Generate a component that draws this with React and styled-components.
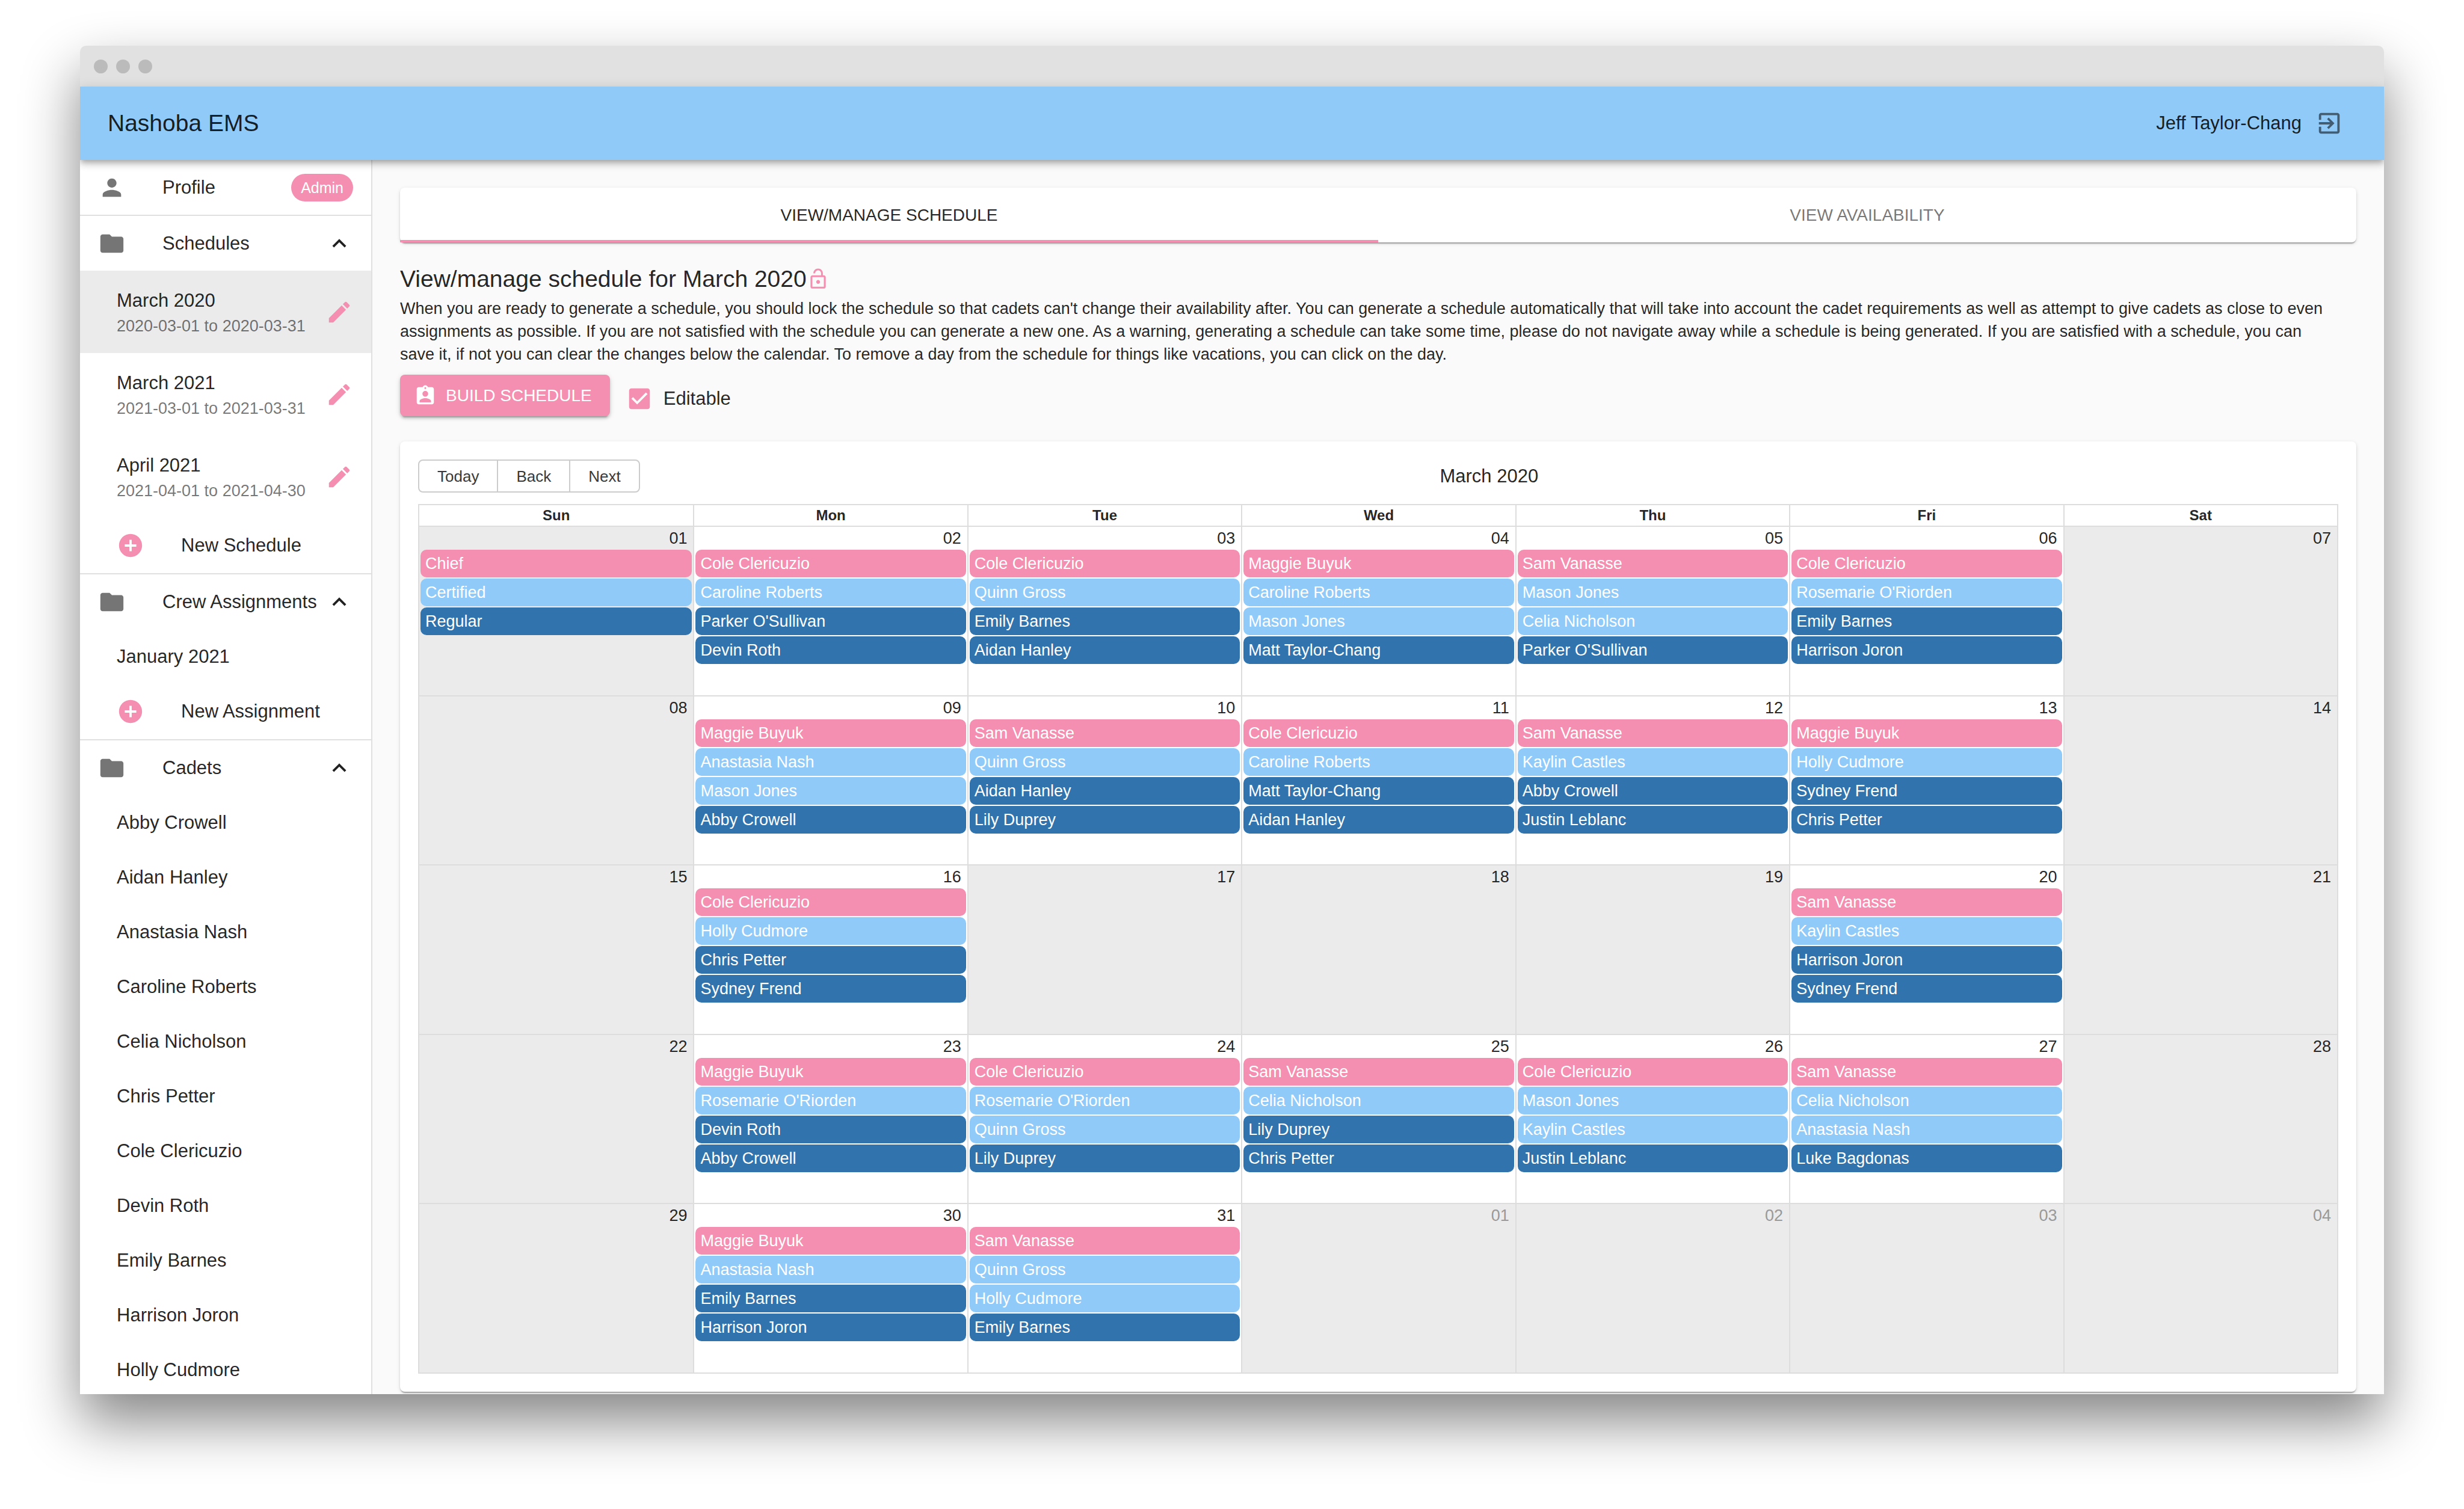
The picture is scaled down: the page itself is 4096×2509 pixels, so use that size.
import React, { useState } from 'react';
import styled, { createGlobalStyle } from 'styled-components';

const INK = 'rgba(0, 0, 0, 0.87)';
const MUTED = 'rgba(0, 0, 0, 0.54)';
const PINK = '#f48fb1';
const SKY = '#90caf9';
const NAVY = '#3174ad';
const LINE = '#ddd';
const RAISED =
  '0 4px 2px -2px rgba(0,0,0,.2), 0 2px 2px 0 rgba(0,0,0,.14), 0 2px 6px 0 rgba(0,0,0,.12)';

const GlobalStyle = createGlobalStyle`
  *, *::before, *::after { box-sizing: border-box; }
  body {
    margin: 0;
    background: #fff;
    color: ${INK};
    font-family: "Liberation Sans", Helvetica, Arial, sans-serif;
    font-size: 31px;
    line-height: 46px;
  }
  button { font: inherit; color: inherit; border: 0; background: none; padding: 0; margin: 0; cursor: pointer; }
  a { color: inherit; text-decoration: none; }
  ul { list-style: none; margin: 0; padding: 0; }
`;

/* ---------- icons ---------- */

const Svg = styled.svg`
  display: block;
  flex: none;
  width: ${(p) => p.$size || 46}px;
  height: ${(p) => p.$size || 46}px;
  fill: ${(p) => p.$color || 'currentColor'};
`;

const PATHS = {
  person:
    'M12 12c2.21 0 4-1.79 4-4s-1.79-4-4-4-4 1.79-4 4 1.79 4 4 4zm0 2c-2.67 0-8 1.34-8 4v2h16v-2c0-2.66-5.33-4-8-4z',
  folder:
    'M10 4H4c-1.1 0-1.99.9-1.99 2L2 18c0 1.1.9 2 2 2h16c1.1 0 2-.9 2-2V8c0-1.1-.9-2-2-2h-8l-2-2z',
  edit:
    'M3 17.25V21h3.75L17.81 9.94l-3.75-3.75L3 17.25zM20.71 7.04c.39-.39.39-1.02 0-1.41l-2.34-2.34c-.39-.39-1.02-.39-1.41 0l-1.83 1.83 3.75 3.75 1.83-1.83z',
  add:
    'M12 2C6.48 2 2 6.48 2 12s4.48 10 10 10 10-4.48 10-10S17.52 2 12 2zm5 11h-4v4h-2v-4H7v-2h4V7h2v4h4v2z',
  less: 'M12 8l-6 6 1.41 1.41L12 10.83l4.59 4.58L18 14z',
  exit:
    'M10.09 15.59L11.5 17l5-5-5-5-1.41 1.41L12.67 11H3v2h9.67l-2.58 2.59zM19 3H5c-1.11 0-2 .9-2 2v4h2V5h14v14H5v-4H3v4c0 1.1.89 2 2 2h14c1.1 0 2-.9 2-2V5c0-1.1-.9-2-2-2z',
  lockOpen:
    'M12 17c1.1 0 2-.9 2-2s-.9-2-2-2-2 .9-2 2 .9 2 2 2zm6-9h-1V6c0-2.76-2.24-5-5-5S7 3.24 7 6h1.9c0-1.71 1.39-3.1 3.1-3.1 1.71 0 3.1 1.39 3.1 3.1v2H6c-1.1 0-2 .9-2 2v10c0 1.1.9 2 2 2h12c1.1 0 2-.9 2-2V10c0-1.1-.9-2-2-2zm0 12H6V10h12v10z',
  badge:
    'M19 3h-4.18C14.4 1.84 13.3 1 12 1c-1.3 0-2.4.84-2.82 2H5c-1.1 0-2 .9-2 2v14c0 1.1.9 2 2 2h14c1.1 0 2-.9 2-2V5c0-1.1-.9-2-2-2zm-7 0c.55 0 1 .45 1 1s-.45 1-1 1-1-.45-1-1 .45-1 1-1zm0 4c1.66 0 3 1.34 3 3s-1.34 3-3 3-3-1.34-3-3 1.34-3 3-3zm6 12H6v-1.4c0-2 4-3.1 6-3.1s6 1.1 6 3.1V19z',
  checked:
    'M19 3H5c-1.11 0-2 .9-2 2v14c0 1.1.89 2 2 2h14c1.11 0 2-.9 2-2V5c0-1.1-.89-2-2-2zm-9 14l-5-5 1.41-1.41L10 14.17l7.59-7.59L19 8l-9 9z',
  unchecked:
    'M19 5v14H5V5h14m0-2H5c-1.1 0-2 .9-2 2v14c0 1.1.9 2 2 2h14c1.1 0 2-.9 2-2V5c0-1.1-.9-2-2-2z',
};

const Icon = ({ name, size, color }) => (
  <Svg viewBox="0 0 24 24" $size={size} $color={color} aria-hidden="true">
    <path d={PATHS[name]} />
  </Svg>
);

/* ---------- window frame ---------- */

const Page = styled.div`
  display: flex;
  height: 100vh;
  padding: 76px 133px 191px;
`;

const Window = styled.div`
  flex: 1;
  min-width: 0;
  display: flex;
  flex-direction: column;
  overflow: hidden;
  border-radius: 10px 10px 0 0;
  background: #fafafa;
  box-shadow: 0 46px 95px rgba(0, 0, 0, 0.48);
`;

const TitleBar = styled.div`
  display: flex;
  flex: none;
  align-items: center;
  gap: 14px;
  height: 68px;
  padding-left: 23px;
  background: #e1e1e1;
`;

const Dot = styled.span`
  width: 23px;
  height: 23px;
  border-radius: 50%;
  background: #bbb;
`;

const AppBar = styled.header`
  position: relative;
  z-index: 1;
  display: flex;
  flex: none;
  align-items: center;
  height: 122px;
  padding: 0 68px 0 46px;
  background: ${SKY};
  box-shadow: 0 4px 8px -2px rgba(0, 0, 0, 0.2), 0 8px 10px 0 rgba(0, 0, 0, 0.14),
    0 2px 19px 0 rgba(0, 0, 0, 0.12);
`;

const Brand = styled.h1`
  flex: 1;
  margin: 0;
  font-size: 39px;
  font-weight: 400;
`;

const IconButton = styled.button`
  display: flex;
  margin-left: ${(p) => p.$gap || 0}px;
`;

const Body = styled.div`
  flex: 1;
  min-height: 0;
  display: flex;
`;

/* ---------- sidebar ---------- */

const Sidebar = styled.nav`
  flex: none;
  width: 486px;
  overflow: hidden;
  border-right: 2px solid #e0e0e0;
  background: #fff;
`;

const Section = styled.section`
  & + & {
    border-top: 2px solid #e0e0e0;
  }
`;

const SectionRow = styled.button`
  display: flex;
  align-items: center;
  width: 100%;
  height: 91px;
  padding: 0 30px;
  text-align: left;
`;

const SectionList = styled.ul`
  && {
    padding-bottom: 1px;
  }
`;

const IconSlot = styled.span`
  flex: none;
  width: 107px;
`;

const Label = styled.span`
  flex: 1;
  white-space: nowrap;
`;

const Chip = styled.span`
  height: 46px;
  padding: 0 16px;
  border-radius: 23px;
  background: ${PINK};
  color: #fff;
  font-size: 25px;
`;

const ItemLink = styled.a`
  display: flex;
  align-items: center;
  height: 91px;
  padding: 0 30px 0 61px;
`;

const ScheduleItem = styled.li`
  display: flex;
  align-items: center;
  height: 137px;
  padding: 0 30px 0 61px;
  background: ${(p) => (p.$selected ? '#ebebeb' : 'transparent')};
`;

const ScheduleLink = styled.a`
  flex: 1;
  display: flex;
  flex-direction: column;
`;

const Range = styled.span`
  color: ${MUTED};
  font-size: 27px;
  line-height: 38px;
  white-space: nowrap;
`;

/* ---------- main ---------- */

const Main = styled.main`
  flex: 1;
  min-width: 0;
  display: flex;
  flex-direction: column;
  padding: 46px 46px 4px;
`;

const Tabs = styled.div`
  display: flex;
  flex: none;
  border-radius: 8px;
  background: #fff;
  box-shadow: ${RAISED};
`;

const Tab = styled.button`
  flex: 1;
  height: 91px;
  font-size: 28px;
  text-transform: uppercase;
  color: ${(p) => (p.$active ? INK : MUTED)};
  box-shadow: ${(p) => (p.$active ? `inset 0 -4px 0 ${PINK}` : 'none')};
`;

const Heading = styled.h2`
  display: flex;
  flex: none;
  align-items: center;
  margin: 30px 0 0;
  font-size: 39px;
  font-weight: 400;
  line-height: 61px;
`;

const Intro = styled.p`
  margin: 0;
  padding-right: 38px;
  font-size: 27px;
  line-height: 38px;
`;

const Actions = styled.div`
  display: flex;
  flex: none;
  align-items: flex-start;
  gap: 26px;
  margin: 15px 0 31px;
`;

const BuildButton = styled.button`
  display: flex;
  align-items: center;
  gap: 15px;
  height: 69px;
  padding: 0 30px 0 23px;
  border-radius: 8px;
  background: ${PINK};
  color: #fff;
  font-size: 28px;
  text-transform: uppercase;
  box-shadow: 0 6px 2px -4px rgba(0, 0, 0, 0.2), 0 4px 4px 0 rgba(0, 0, 0, 0.14),
    0 2px 10px 0 rgba(0, 0, 0, 0.12);
`;

const CheckLabel = styled.label`
  display: flex;
  align-items: center;
  gap: 17px;
  height: 80px;
  cursor: pointer;
`;

const CheckBox = styled.span`
  position: relative;
  display: block;
  color: ${PINK};
`;

const CheckInput = styled.input`
  position: absolute;
  inset: 0;
  width: 100%;
  height: 100%;
  margin: 0;
  opacity: 0;
  cursor: pointer;
`;

/* ---------- calendar ---------- */

const CalendarCard = styled.section`
  flex: 1;
  min-height: 0;
  display: flex;
  flex-direction: column;
  padding: 30px;
  border-radius: 8px;
  background: #fff;
  box-shadow: ${RAISED};
`;

const Toolbar = styled.div`
  display: flex;
  flex: none;
  align-items: center;
  margin-bottom: 19px;
`;

const ButtonGroup = styled.div`
  display: flex;
  border: 2px solid #ccc;
  border-radius: 8px;
`;

const NavButton = styled.button`
  height: 51px;
  padding: 0 30px;
  color: #373a3c;
  font-size: 26px;

  & + & {
    border-left: 2px solid #ccc;
  }
`;

const MonthLabel = styled.span`
  flex: 1;
  text-align: center;
`;

const Month = styled.table`
  flex: 1;
  min-height: 0;
  display: flex;
  flex-direction: column;
  border: 2px solid ${LINE};
`;

const Head = styled.thead`
  display: block;
  flex: none;
`;

const Weeks = styled.tbody`
  flex: 1;
  display: flex;
  flex-direction: column;
`;

const HeadRow = styled.tr`
  display: grid;
  grid-template-columns: repeat(7, 1fr);
`;

const Weekday = styled.th`
  padding: 0;
  font-size: 24px;
  line-height: 34px;

  & + & {
    border-left: 2px solid ${LINE};
  }
`;

const Week = styled.tr`
  flex: 1;
  display: grid;
  grid-template-columns: repeat(7, 1fr);
  border-top: 2px solid ${LINE};
`;

const Day = styled.td`
  display: flex;
  flex-direction: column;
  gap: 2px;
  min-width: 0;
  padding: 0 2px;
  background: ${(p) => (p.$off ? '#ebebeb' : '#fff')};

  & + & {
    border-left: 2px solid ${LINE};
  }
`;

const DayNumber = styled.a`
  height: 36px;
  padding-right: 8px;
  color: ${(p) => (p.$outside ? '#999' : INK)};
  font-size: 27px;
  line-height: 38px;
  text-align: right;
`;

const EVENT_COLORS = { p: PINK, s: SKY, n: NAVY };

const Shift = styled.button`
  height: 46px;
  padding: 0 8px;
  overflow: hidden;
  border-radius: 10px;
  background: ${(p) => EVENT_COLORS[p.$kind]};
  color: #fff;
  font-size: 27px;
  text-align: left;
  white-space: nowrap;
`;

/* ---------- data ---------- */

const SCHEDULES = [
  ['March 2020', '2020-03-01 to 2020-03-31'],
  ['March 2021', '2021-03-01 to 2021-03-31'],
  ['April 2021', '2021-04-01 to 2021-04-30'],
];

const CADETS = [
  'Abby Crowell', 'Aidan Hanley', 'Anastasia Nash', 'Caroline Roberts', 'Celia Nicholson',
  'Chris Petter', 'Cole Clericuzio', 'Devin Roth', 'Emily Barnes', 'Harrison Joron', 'Holly Cudmore',
];

const WEEKDAYS = ['Sun', 'Mon', 'Tue', 'Wed', 'Thu', 'Fri', 'Sat'];

const on = (date, kinds, ...names) => ({
  date,
  shifts: names.map((name, i) => ({ name, kind: kinds[i] })),
});
const off = (date) => ({ date, off: true, shifts: [] });
const outside = (date) => ({ date, off: true, outside: true, shifts: [] });

const WEEKS = [
  [
    { ...on('01', 'psn', 'Chief', 'Certified', 'Regular'), off: true },
    on('02', 'psnn', 'Cole Clericuzio', 'Caroline Roberts', "Parker O'Sullivan", 'Devin Roth'),
    on('03', 'psnn', 'Cole Clericuzio', 'Quinn Gross', 'Emily Barnes', 'Aidan Hanley'),
    on('04', 'pssn', 'Maggie Buyuk', 'Caroline Roberts', 'Mason Jones', 'Matt Taylor-Chang'),
    on('05', 'pssn', 'Sam Vanasse', 'Mason Jones', 'Celia Nicholson', "Parker O'Sullivan"),
    on('06', 'psnn', 'Cole Clericuzio', "Rosemarie O'Riorden", 'Emily Barnes', 'Harrison Joron'),
    off('07'),
  ],
  [
    off('08'),
    on('09', 'pssn', 'Maggie Buyuk', 'Anastasia Nash', 'Mason Jones', 'Abby Crowell'),
    on('10', 'psnn', 'Sam Vanasse', 'Quinn Gross', 'Aidan Hanley', 'Lily Duprey'),
    on('11', 'psnn', 'Cole Clericuzio', 'Caroline Roberts', 'Matt Taylor-Chang', 'Aidan Hanley'),
    on('12', 'psnn', 'Sam Vanasse', 'Kaylin Castles', 'Abby Crowell', 'Justin Leblanc'),
    on('13', 'psnn', 'Maggie Buyuk', 'Holly Cudmore', 'Sydney Frend', 'Chris Petter'),
    off('14'),
  ],
  [
    off('15'),
    on('16', 'psnn', 'Cole Clericuzio', 'Holly Cudmore', 'Chris Petter', 'Sydney Frend'),
    off('17'),
    off('18'),
    off('19'),
    on('20', 'psnn', 'Sam Vanasse', 'Kaylin Castles', 'Harrison Joron', 'Sydney Frend'),
    off('21'),
  ],
  [
    off('22'),
    on('23', 'psnn', 'Maggie Buyuk', "Rosemarie O'Riorden", 'Devin Roth', 'Abby Crowell'),
    on('24', 'pssn', 'Cole Clericuzio', "Rosemarie O'Riorden", 'Quinn Gross', 'Lily Duprey'),
    on('25', 'psnn', 'Sam Vanasse', 'Celia Nicholson', 'Lily Duprey', 'Chris Petter'),
    on('26', 'pssn', 'Cole Clericuzio', 'Mason Jones', 'Kaylin Castles', 'Justin Leblanc'),
    on('27', 'pssn', 'Sam Vanasse', 'Celia Nicholson', 'Anastasia Nash', 'Luke Bagdonas'),
    off('28'),
  ],
  [
    off('29'),
    on('30', 'psnn', 'Maggie Buyuk', 'Anastasia Nash', 'Emily Barnes', 'Harrison Joron'),
    on('31', 'pssn', 'Sam Vanasse', 'Quinn Gross', 'Holly Cudmore', 'Emily Barnes'),
    outside('01'),
    outside('02'),
    outside('03'),
    outside('04'),
  ],
];

/* ---------- views ---------- */

const Group = ({ icon, title, badge, children }) => {
  const [open, setOpen] = useState(true);
  return (
    <Section>
      <SectionRow type="button" onClick={() => setOpen(!open)}>
        <IconSlot>
          <Icon name={icon} color="#757575" />
        </IconSlot>
        <Label>{title}</Label>
        {badge ? <Chip>{badge}</Chip> : <Icon name="less" />}
      </SectionRow>
      {open && children && <SectionList>{children}</SectionList>}
    </Section>
  );
};

const NewItem = ({ children }) => (
  <li>
    <ItemLink href="#new">
      <IconSlot>
        <Icon name="add" color={PINK} />
      </IconSlot>
      <Label>{children}</Label>
    </ItemLink>
  </li>
);

const SideNav = () => (
  <Sidebar>
    <Group icon="person" title="Profile" badge="Admin" />
    <Group icon="folder" title="Schedules">
      {SCHEDULES.map(([name, range], i) => (
        <ScheduleItem key={name} $selected={i === 0}>
          <ScheduleLink href="#schedule">
            <span>{name}</span>
            <Range>{range}</Range>
          </ScheduleLink>
          <IconButton type="button" aria-label={`Edit ${name}`}>
            <Icon name="edit" color={PINK} />
          </IconButton>
        </ScheduleItem>
      ))}
      <NewItem>New Schedule</NewItem>
    </Group>
    <Group icon="folder" title="Crew Assignments">
      <li>
        <ItemLink href="#assignment">January 2021</ItemLink>
      </li>
      <NewItem>New Assignment</NewItem>
    </Group>
    <Group icon="folder" title="Cadets">
      {CADETS.map((name) => (
        <li key={name}>
          <ItemLink href="#cadet">{name}</ItemLink>
        </li>
      ))}
    </Group>
  </Sidebar>
);

const Calendar = () => (
  <CalendarCard>
    <Toolbar>
      <ButtonGroup>
        <NavButton type="button">Today</NavButton>
        <NavButton type="button">Back</NavButton>
        <NavButton type="button">Next</NavButton>
      </ButtonGroup>
      <MonthLabel>March 2020</MonthLabel>
    </Toolbar>
    <Month>
      <Head>
        <HeadRow>
          {WEEKDAYS.map((day) => (
            <Weekday key={day} scope="col">{day}</Weekday>
          ))}
        </HeadRow>
      </Head>
      <Weeks>
        {WEEKS.map((week) => (
          <Week key={week[0].date}>
            {week.map((day) => (
              <Day key={day.date} $off={day.off}>
                <DayNumber href="#day" $outside={day.outside}>{day.date}</DayNumber>
                {day.shifts.map((shift) => (
                  <Shift key={shift.name} type="button" $kind={shift.kind}>{shift.name}</Shift>
                ))}
              </Day>
            ))}
          </Week>
        ))}
      </Weeks>
    </Month>
  </CalendarCard>
);

export default function App() {
  const [editable, setEditable] = useState(true);
  return (
    <>
      <GlobalStyle />
      <Page>
        <Window>
          <TitleBar>
            <Dot />
            <Dot />
            <Dot />
          </TitleBar>
          <AppBar>
            <Brand>Nashoba EMS</Brand>
            <span>Jeff Taylor-Chang</span>
            <IconButton type="button" aria-label="Sign out" $gap={23}>
              <Icon name="exit" color={MUTED} />
            </IconButton>
          </AppBar>
          <Body>
            <SideNav />
            <Main>
              <Tabs role="tablist">
                <Tab type="button" role="tab" aria-selected="true" $active>View/Manage Schedule</Tab>
                <Tab type="button" role="tab" aria-selected="false">View Availability</Tab>
              </Tabs>
              <Heading>
                View/manage schedule for March 2020
                <IconButton type="button" aria-label="Lock schedule">
                  <Icon name="lockOpen" size={38} color={PINK} />
                </IconButton>
              </Heading>
              <Intro>
                When you are ready to generate a schedule, you should lock the schedule so that cadets can't
                change their availability after. You can generate a schedule automatically that will take into
                account the cadet requirements as well as attempt to give cadets as close to even assignments as
                possible. If you are not satisfied with the schedule you can generate a new one. As a warning,
                generating a schedule can take some time, please do not navigate away while a schedule is being
                generated. If you are satisfied with a schedule, you can save it, if not you can clear the changes
                below the calendar. To remove a day from the schedule for things like vacations, you can click on
                the day.
              </Intro>
              <Actions>
                <BuildButton type="button">
                  <Icon name="badge" size={38} />
                  Build Schedule
                </BuildButton>
                <CheckLabel htmlFor="editable">
                  <CheckBox>
                    <CheckInput
                      id="editable"
                      type="checkbox"
                      checked={editable}
                      onChange={(e) => setEditable(e.target.checked)}
                    />
                    <Icon name={editable ? 'checked' : 'unchecked'} />
                  </CheckBox>
                  Editable
                </CheckLabel>
              </Actions>
              <Calendar />
            </Main>
          </Body>
        </Window>
      </Page>
    </>
  );
}
